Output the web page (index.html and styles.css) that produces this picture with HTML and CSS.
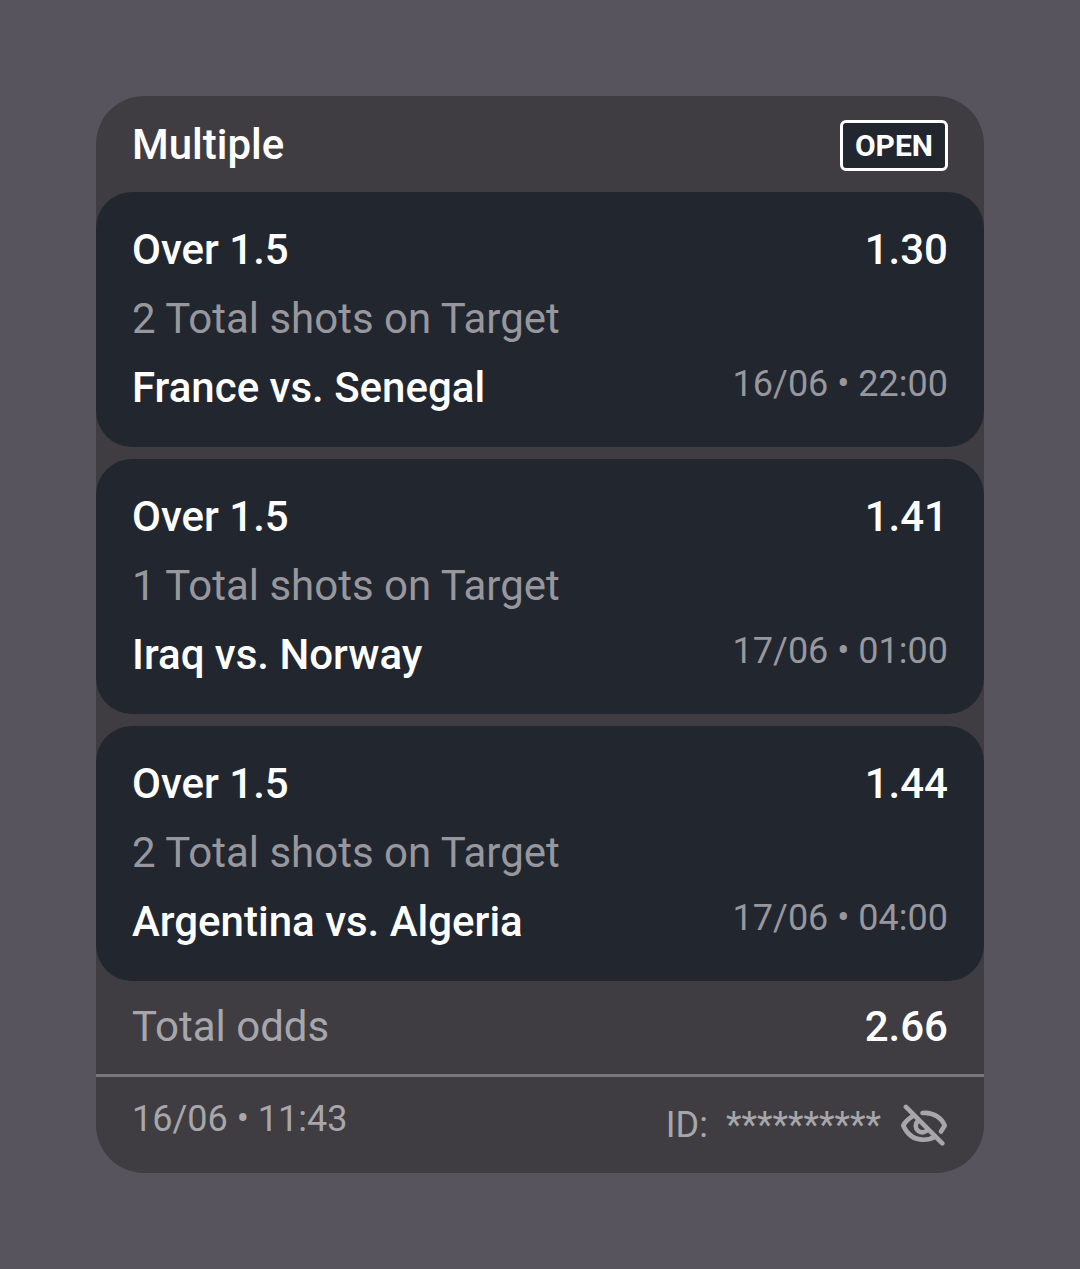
FILE: index.html
```html
<!DOCTYPE html>
<html lang="en">
<head>
<meta charset="utf-8">
<meta name="viewport" content="width=device-width, initial-scale=1">
<title>Multiple bet</title>
<link rel="stylesheet" href="styles.css">
</head>
<body>
<main class="slip">
  <header class="slip-header">
    <h1 class="title">Multiple</h1>
    <span class="status">OPEN</span>
  </header>
  <section class="bets">
    <article class="bet">
      <div class="row"><h2 class="strong">Over 1.5</h2><span class="strong">1.30</span></div>
      <p class="market">2 Total shots on Target</p>
      <div class="row"><span class="strong">France vs. Senegal</span><time class="date">16/06 • 22:00</time></div>
    </article>
    <article class="bet">
      <div class="row"><h2 class="strong">Over 1.5</h2><span class="strong">1.41</span></div>
      <p class="market">1 Total shots on Target</p>
      <div class="row"><span class="strong">Iraq vs. Norway</span><time class="date">17/06 • 01:00</time></div>
    </article>
    <article class="bet">
      <div class="row"><h2 class="strong">Over 1.5</h2><span class="strong">1.44</span></div>
      <p class="market">2 Total shots on Target</p>
      <div class="row"><span class="strong">Argentina vs. Algeria</span><time class="date">17/06 • 04:00</time></div>
    </article>
  </section>
  <div class="total"><span class="market">Total odds</span><span class="strong">2.66</span></div>
  <footer class="slip-footer">
    <time class="date">16/06 • 11:43</time>
    <div class="bet-id">
      <span>ID:</span><span class="mask">**********</span>
      <button class="reveal" type="button" aria-label="Show bet ID">
        <svg class="eye" viewBox="0 0 48 42" fill="none" stroke="currentColor" stroke-width="4.6" stroke-linecap="round" stroke-linejoin="round">
          <path d="M22.500 9c11-1 19 5 22.200 12.500L41 27.500"/>
          <path d="M13 12C8 15 5 18 3.300 21.500 7 30 14 35.700 23.500 35.700c4 0 8-1 11.500-3"/>
          <path d="M17.800 17a6.600 6.600 0 1 0 10 8.500"/>
          <path d="M5.900 2.900l36.400 36.400"/>
        </svg>
      </button>
    </div>
  </footer>
</main>
</body>
</html>
```
FILE: styles.css
```css
* { box-sizing: border-box; }
body {
  margin: 0;
  padding: 96px;
  background: #57545e;
  color: #fff;
  font-family: Roboto, sans-serif;
  font-size: 42px;
  line-height: 48px;
}
h1, h2, p { margin: 0; }
.slip { background: #403d42; border-radius: 48px; overflow: hidden; }
.slip-header {
  display: flex;
  align-items: flex-start;
  justify-content: space-between;
  padding: 24px 36px 21px;
}
.title, .strong { font-size: 42px; font-weight: 500; }
.title { line-height: 50px; }
.status {
  padding: 0 12px;
  border: 3px solid #fff;
  border-radius: 6px;
  background: #22262f;
  font-size: 30px;
  font-weight: 700;
  line-height: 45px;
}
.bets { display: grid; gap: 12px; }
.bet {
  display: grid;
  gap: 21px;
  padding: 34px 36px 35px;
  border-radius: 36px;
  background: #22262f;
}
.row, .total, .slip-footer { display: flex; justify-content: space-between; }
.market { color: #98979d; }
.date, .bet-id { color: #98979d; font-size: 36px; line-height: 42px; }
.row .date { line-height: 40px; }
.total { padding: 22px 36px 23px; border-bottom: 3px solid #76787b; }
.total .market, .slip-footer .date, .bet-id { color: #a7a7ab; }
.slip-footer { padding: 21px 36px 27px; }
.bet-id { display: flex; align-items: center; padding-top: 6px; }
.mask { margin-left: 18px; }
.reveal {
  display: flex;
  margin-left: 19px;
  padding: 0;
  border: 0;
  background: none;
  color: inherit;
  cursor: pointer;
}
.eye { width: 48px; height: 42px; }
```
